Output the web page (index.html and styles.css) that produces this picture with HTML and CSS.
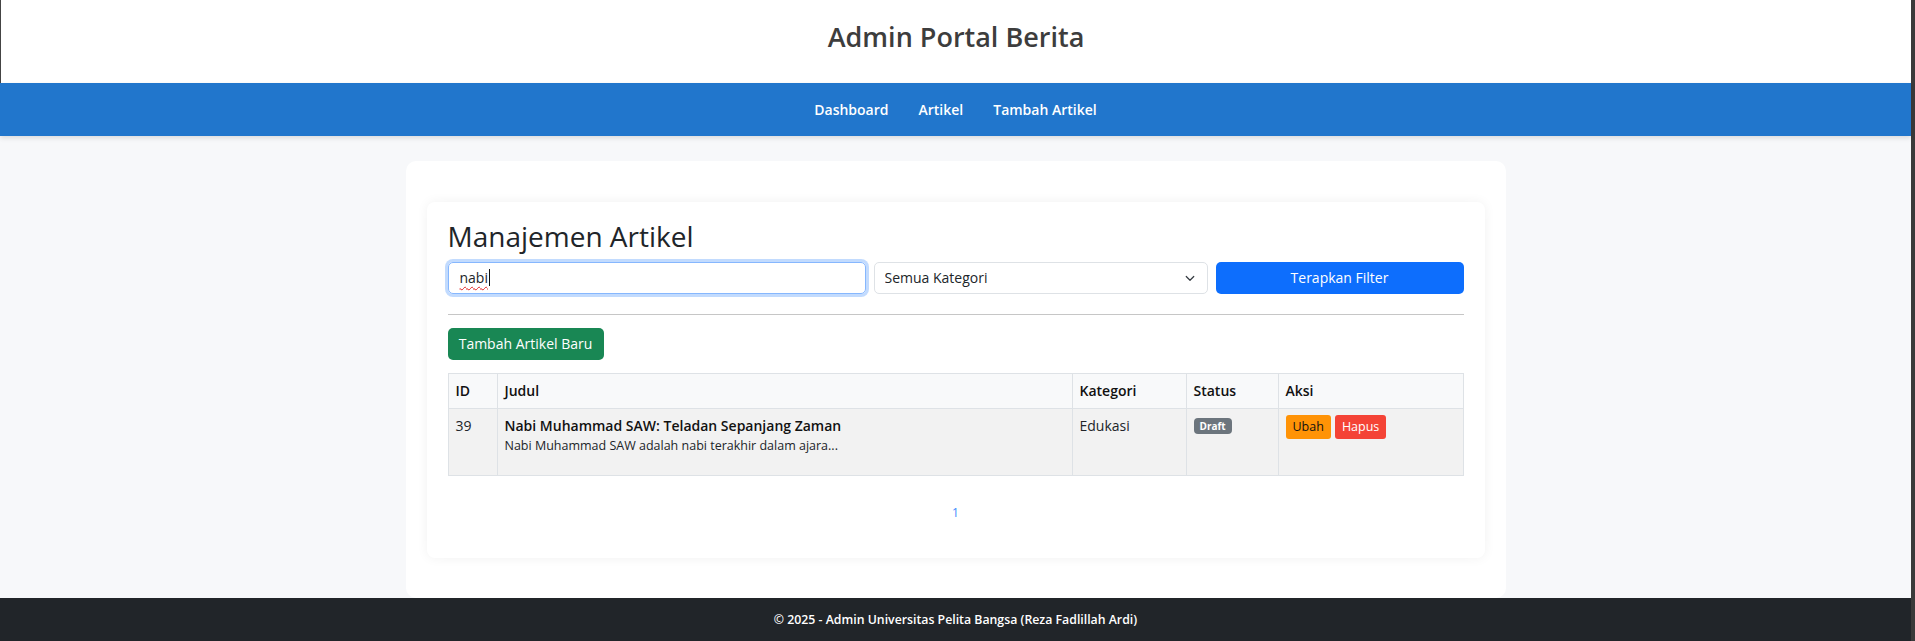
FILE: index.html
```html
<!DOCTYPE html>
<html lang="id">
<head>
<meta charset="utf-8">
<title>Admin Portal Berita</title>
<link rel="stylesheet" href="styles.css">
</head>
<body>
<div class="page">
  <header class="site-header">
    <h1 class="site-title">Admin Portal Berita</h1>
  </header>
  <nav class="main-nav">
    <a href="#" class="nav-link">Dashboard</a>
    <a href="#" class="nav-link">Artikel</a>
    <a href="#" class="nav-link">Tambah Artikel</a>
  </nav>
  <main class="main">
    <div class="container">
      <section class="card">
        <h2 class="card-title">Manajemen Artikel</h2>
        <form class="filter-row">
          <div class="search-input" role="textbox"><span class="typed">nabi</span><span class="caret"></span></div>
          <div class="select-wrap">
            <select class="form-select">
              <option>Semua Kategori</option>
            </select>
            <svg class="chevron" width="12" height="12" viewBox="0 0 16 16"><path d="M3 6l5 5 5-5" fill="none" stroke="#343a40" stroke-width="1.6" stroke-linecap="round" stroke-linejoin="round"/></svg>
          </div>
          <button type="button" class="btn btn-primary">Terapkan Filter</button>
        </form>
        <hr class="divider">
        <button type="button" class="btn btn-success">Tambah Artikel Baru</button>
        <table class="table">
          <colgroup>
            <col class="c-id"><col class="c-judul"><col class="c-kat"><col class="c-status"><col class="c-aksi">
          </colgroup>
          <thead>
            <tr><th>ID</th><th>Judul</th><th>Kategori</th><th>Status</th><th>Aksi</th></tr>
          </thead>
          <tbody>
            <tr>
              <td>39</td>
              <td>
                <div class="art-title">Nabi Muhammad SAW: Teladan Sepanjang Zaman</div>
                <p class="art-excerpt">Nabi Muhammad SAW adalah nabi terakhir dalam ajara...</p>
              </td>
              <td>Edukasi</td>
              <td><span class="badge">Draft</span></td>
              <td>
                <div class="actions">
                  <a href="#" class="btn-sm btn-warn">Ubah</a>
                  <a href="#" class="btn-sm btn-danger">Hapus</a>
                </div>
              </td>
            </tr>
          </tbody>
        </table>
        <nav class="pagination"><a href="#" class="page-link">1</a></nav>
      </section>
    </div>
  </main>
  <footer class="site-footer">© 2025 - Admin Universitas Pelita Bangsa (Reza Fadlillah Ardi)</footer>
</div>
</body>
</html>
```
FILE: styles.css
```css
* { box-sizing: border-box; }
html, body { margin: 0; padding: 0; height: 100%; }
body {
  font-family: "Open Sans", "Noto Sans", sans-serif;
  font-size: 14px;
  color: #212529;
  background: #3a3a3a;
}
.page {
  width: 1911px;
  min-height: 100vh;
  display: flex;
  flex-direction: column;
  background: #f7f8fa;
}
.site-header {
  height: 83px;
  background: #fff;
  border-left: 1px solid #444;
  padding-top: 21px;
  text-align: center;
}
.site-title {
  margin: 0;
  font-size: 27px;
  line-height: 1.2;
  font-weight: 600;
  color: #3d3d3d;
}
.main-nav {
  height: 53px;
  background: #2176cc;
  display: flex;
  justify-content: center;
  align-items: center;
  box-shadow: 0 2px 5px rgba(0,0,0,0.12);
  position: relative;
  z-index: 1;
}
.nav-link {
  color: #fff;
  text-decoration: none;
  font-weight: 600;
  font-size: 14px;
  padding: 0 15px;
}
.main {
  flex: 1;
  display: flex;
  flex-direction: column;
}
.container {
  flex: 1;
  width: 1100px;
  margin: 25px auto 0;
  background: #fff;
  border-radius: 10px;
  padding: 41px 21px 40px;
}
.card {
  background: #fff;
  border-radius: 8px;
  box-shadow: 0 0 12px rgba(0,0,0,0.06);
  padding: 18px 21px 20px;
}
.card-title {
  margin: 0 0 8px;
  font-size: 28px;
  line-height: 1.2;
  font-weight: 400;
  color: #212529;
}
.filter-row {
  display: grid;
  grid-template-columns: 418px 334px 1fr;
  column-gap: 8px;
  margin: 0;
}
.search-input {
  height: 32px;
  border: 1px solid #86b7fe;
  border-radius: 5px;
  box-shadow: 0 0 0 3px rgba(13,110,253,0.25);
  padding: 0 11px;
  display: flex;
  align-items: center;
  font-size: 14px;
  color: #212529;
}
.typed {
  text-decoration: underline wavy #e02020;
  text-decoration-thickness: 1px;
  text-underline-offset: 3px;
}
.caret {
  width: 1px;
  height: 17px;
  background: #111;
  margin-left: 1px;
}
.select-wrap {
  position: relative;
}
.form-select {
  width: 100%;
  height: 32px;
  appearance: none;
  -webkit-appearance: none;
  border: 1px solid #dee2e6;
  border-radius: 5px;
  background: #fff;
  padding: 0 30px 0 10px;
  font-family: inherit;
  font-size: 14px;
  color: #212529;
}
.chevron {
  position: absolute;
  right: 12px;
  top: 10px;
  pointer-events: none;
}
.btn {
  font-family: inherit;
  font-size: 14px;
  font-weight: 500;
  color: #fff;
  border: none;
  border-radius: 5px;
  height: 32px;
  cursor: pointer;
}
.btn-primary { background: #0d6efd; }
.btn-success {
  background: #198754;
  padding: 0 11px;
  width: 156px;
  display: block;
}
.divider {
  border: 0;
  border-top: 1px solid #c6c6c6;
  margin: 20px 0 13px;
}
.table {
  width: 100%;
  border-collapse: collapse;
  margin-top: 13px;
  font-size: 14px;
}
.c-id { width: 49px; }
.c-kat { width: 114px; }
.c-status { width: 92px; }
.c-aksi { width: 185px; }
.table th, .table td {
  border: 1px solid #dee2e6;
  padding: 7px 7px;
  line-height: 20px;
  text-align: left;
  vertical-align: top;
}
.table th {
  background: #f8f9fa;
  font-weight: 600;
  color: #111;
}
.table td { background: #f2f2f2; color: #212529; }
.art-title { font-weight: 600; color: #111; }
.art-excerpt {
  margin: 1px 0 13px;
  font-size: 12.5px;
  line-height: 18px;
}
.badge {
  display: inline-block;
  background: #6c757d;
  color: #fff;
  font-size: 10px;
  font-weight: 700;
  line-height: 1;
  padding: 3px 6px;
  border-radius: 4px;
  margin-top: 2px;
  vertical-align: top;
}
.actions {
  display: flex;
  gap: 4px;
  margin-top: -1px;
}
.btn-sm {
  display: inline-block;
  font-size: 12.5px;
  line-height: 16px;
  padding: 4px 7px;
  border-radius: 3px;
  text-decoration: none;
}
.btn-warn { background: #ff9306; color: #111; }
.btn-danger { background: #f44336; color: #fff; }
.pagination {
  display: flex;
  justify-content: center;
  margin: 28px 0 16px;
}
.page-link {
  color: #3d8bfd;
  text-decoration: none;
  font-size: 12px;
  line-height: 18px;
}
.site-footer {
  height: 43px;
  background: #212529;
  color: #fff;
  display: flex;
  justify-content: center;
  align-items: center;
  font-size: 12.3px;
  font-weight: 600;
}
```
